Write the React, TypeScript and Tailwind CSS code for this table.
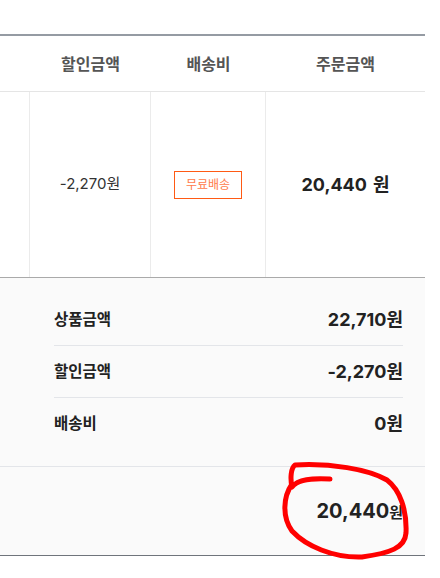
export default function App() {
  const font = { fontFamily: 'Inter, "Noto Sans CJK KR", sans-serif' };
  return (
    <div className="relative w-[440px] h-[578px] overflow-hidden bg-white pt-[34px]" style={font}>
      <div className="w-[425px]">
        {/* header */}
        <div className="grid grid-cols-[30px_121px_115px_159px] h-[58px] border-t-2 border-b border-t-[#959ba3] border-b-[#e5e5e5] text-[16px] font-bold text-[#555]">
          <div />
          <div className="flex items-center justify-center">할인금액</div>
          <div className="flex items-center justify-center">배송비</div>
          <div className="flex items-center justify-center">주문금액</div>
        </div>

        {/* item row */}
        <div className="grid grid-cols-[30px_121px_115px_159px] h-[186px] border-b border-[#aaaaaa]">
          <div className="border-r border-[#ebebeb]" />
          <div className="flex items-center justify-center border-r border-[#ebebeb] text-[15px] text-[#333]">-2,270원</div>
          <div className="flex items-center justify-center border-r border-[#ebebeb]">
            <span className="flex items-center justify-center w-[68px] h-[28px] border border-[#ff5a14] text-[12px] text-[#ff7a4a]">무료배송</span>
          </div>
          <div className="flex items-center justify-center text-[18px] font-bold text-[#222]">
            20,440<span className="ml-[6px]">원</span>
          </div>
        </div>

        {/* summary */}
        <div className="bg-[#fafafa] border-b border-[#e3e5e9] pl-[54px] pr-[22px] pt-[16px] pb-[17px]">
          <div className="flex items-center justify-between h-[52px] border-b border-[#e3e5e9]">
            <span className="text-[15.5px] font-semibold text-[#222]">상품금액</span>
            <span className="text-[18px] font-bold text-[#222]">22,710원</span>
          </div>
          <div className="flex items-center justify-between h-[52px] border-b border-[#e3e5e9]">
            <span className="text-[15.5px] font-semibold text-[#222]">할인금액</span>
            <span className="text-[18px] font-bold text-[#222]">-2,270원</span>
          </div>
          <div className="flex items-center justify-between h-[51px]">
            <span className="text-[15.5px] font-semibold text-[#222]">배송비</span>
            <span className="text-[18px] font-bold text-[#222]">0원</span>
          </div>
        </div>

        {/* total */}
        <div className="flex items-center justify-end h-[89px] bg-[#fafafa] border-b border-[#6f747b] pr-[22px]">
          <span className="text-[20px] font-bold text-[#222]">
            20,440<span className="text-[15px]">원</span>
          </span>
        </div>
      </div>

      {/* hand-drawn annotation */}
      <svg className="absolute left-0 top-0 pointer-events-none" width="440" height="578" viewBox="0 0 440 578">
        <path
          d="M330 479 C312 478 298 479 292 487 C290 478 291 468 295 465 C330 463 368 469 387 480 C400 490 407 510 406 533 C405 548 390 553 362 557 C333 558 306 546 292 531 C282 517 283 497 292 484"
          fill="none"
          stroke="#ff0000"
          strokeWidth="5"
          strokeLinecap="round"
          strokeLinejoin="round"
        />
      </svg>
    </div>
  );
}
